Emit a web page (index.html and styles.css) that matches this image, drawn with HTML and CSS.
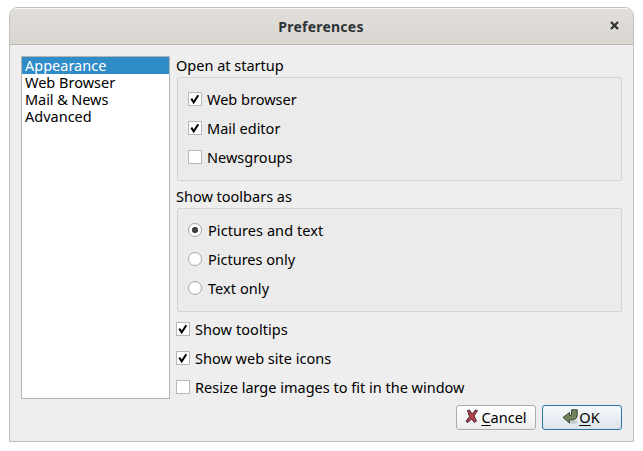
FILE: index.html
```html
<!DOCTYPE html>
<html lang="en">
<head>
<meta charset="utf-8">
<title>Preferences</title>
<link rel="stylesheet" href="styles.css">
</head>
<body>
<svg width="0" height="0" class="defs"><symbol id="tick" viewBox="0 0 12 12"><path d="M2.3 5.6 4.7 9.4 9.3 2.2" fill="none" stroke="#000" stroke-width="2"/></symbol></svg>
<main class="window">
  <header class="titlebar">
    <h1>Preferences</h1>
    <svg class="close" viewBox="0 0 9 9" width="9" height="9"><path d="M1 1 8 8M8 1 1 8" stroke="#2e3436" stroke-width="2.3"/></svg>
  </header>
  <div class="content">
    <ul class="list">
      <li class="selected">Appearance</li>
      <li>Web Browser</li>
      <li class="mail">Mail &amp; News</li>
      <li>Advanced</li>
    </ul>
    <section class="panel">
      <h2>Open at startup</h2>
      <div class="group">
        <div class="option"><i class="box"><svg><use href="#tick"/></svg></i><span>Web browser</span></div>
        <div class="option"><i class="box"><svg><use href="#tick"/></svg></i><span>Mail editor</span></div>
        <div class="option"><i class="box"></i><span>Newsgroups</span></div>
      </div>
      <h2>Show toolbars as</h2>
      <div class="group radios">
        <div class="option"><i class="radio on"></i><span class="wide">Pictures and text</span></div>
        <div class="option"><i class="radio"></i><span>Pictures only</span></div>
        <div class="option"><i class="radio"></i><span class="wide">Text only</span></div>
      </div>
      <div class="extras">
        <div class="option"><i class="box"><svg><use href="#tick"/></svg></i><span class="wide">Show tooltips</span></div>
        <div class="option"><i class="box"><svg><use href="#tick"/></svg></i><span>Show web site icons</span></div>
        <div class="option"><i class="box"></i><span>Resize large images to fit in the window</span></div>
      </div>
      <div class="buttons">
        <button class="cancel"><svg width="14" height="16" viewBox="0 0 14 16"><path d="M2.5 1.5 4.5 1 7 5 10.5 1 12.5 1.5 9 7 11.5 12 9.5 13.5 6.5 10 3 13.5 1 12.5 4.5 7.5Z" fill="#b5404c" stroke="#432b30" stroke-width="1"/></svg><span><u>C</u>ancel</span></button>
        <button class="ok"><svg width="17" height="16" viewBox="0 0 17 16"><ellipse cx="10.5" cy="13" rx="5" ry="1.7" fill="#c4cacd"/><path d="M9.5 .8H15.2V6Q15.2 10.5 10.5 10.8H7.5V14L1 8.5 7.5 3.5V6.8Q9.5 6.8 9.5 5Z" fill="#71845c" stroke="#3b4632" stroke-width="1"/></svg><span><u>O</u>K</span></button>
      </div>
    </section>
  </div>
</main>
</body>
</html>
```
FILE: styles.css
```css
* { box-sizing: border-box; }
body { margin: 0; background: #fff; color: #000; font: 14.5px/17px "Noto Sans", sans-serif; }
.defs { display: block; }
.window { width: 625px; height: 435px; margin: 7px 0 0 9px; border: 1px solid #bfbfbf; border-radius: 9px 9px 0 0; background: #eee; overflow: hidden; }
.titlebar { height: 37px; display: flex; align-items: center; background: linear-gradient(#e1dedb, #dad6d0); border-bottom: 1px solid #bfb8b0; box-shadow: inset 0 1px #f9f8f7; }
h1 { flex: 1; margin: 0; padding-left: 22px; text-align: center; font-size: 14px; line-height: 17px; letter-spacing: .22px; color: #2e3436; }
.close { margin-right: 14px; margin-top: -1px; display: block; }
.content { display: flex; padding: 11px; }
.list { width: 149px; height: 343px; margin: 0; padding: 0; border: 1px solid #b4b4b4; background: #fff; list-style: none; }
li { height: 17px; padding-left: 3px; white-space: nowrap; }
.mail { letter-spacing: -.08px; }
.selected { background: #308cc6; color: #fff; }
.panel { width: 446px; margin-left: 6px; }
h2 { margin: 0; height: 21px; font-size: inherit; font-weight: normal; line-height: 19px; }
.group { height: 104px; margin: 0 0 6px 1px; padding: 6px 10px; border: 1px solid #d3d3d3; border-radius: 2px; background: #ebebeb; }
.option { height: 29px; display: flex; align-items: center; gap: 5px; white-space: nowrap; }
.option span { position: relative; top: 1px; }
.wide { letter-spacing: .07px; }
.radios .option { gap: 6px; }
.box, .radio { flex: none; width: 14px; height: 14px; border: 1px solid #b8b8b8; background: #fff; display: block; }
.box svg { display: block; width: 12px; height: 12px; }
.radio { border-radius: 50%; border-color: #a8a8a8; }
.on { background: radial-gradient(circle, #404040 2.8px, #fff 3.5px); }
.extras { margin-top: -4px; }
.buttons { display: flex; justify-content: flex-end; gap: 6px; margin-top: 4px; }
button { width: 80px; height: 25px; padding: 0; display: flex; align-items: center; justify-content: center; border: 1px solid #acacac; border-radius: 3px; background: linear-gradient(#fff, #ededed); color: #000; font: inherit; }
button svg { flex: none; margin-top: -2px; }
.cancel svg { margin-right: 2px; }
.ok { padding-right: 2px; border-color: #2b76a8; background: linear-gradient(#f7fafc, #dbe3ea); }
u { text-underline-offset: 2px; text-decoration-thickness: 1px; }
```
